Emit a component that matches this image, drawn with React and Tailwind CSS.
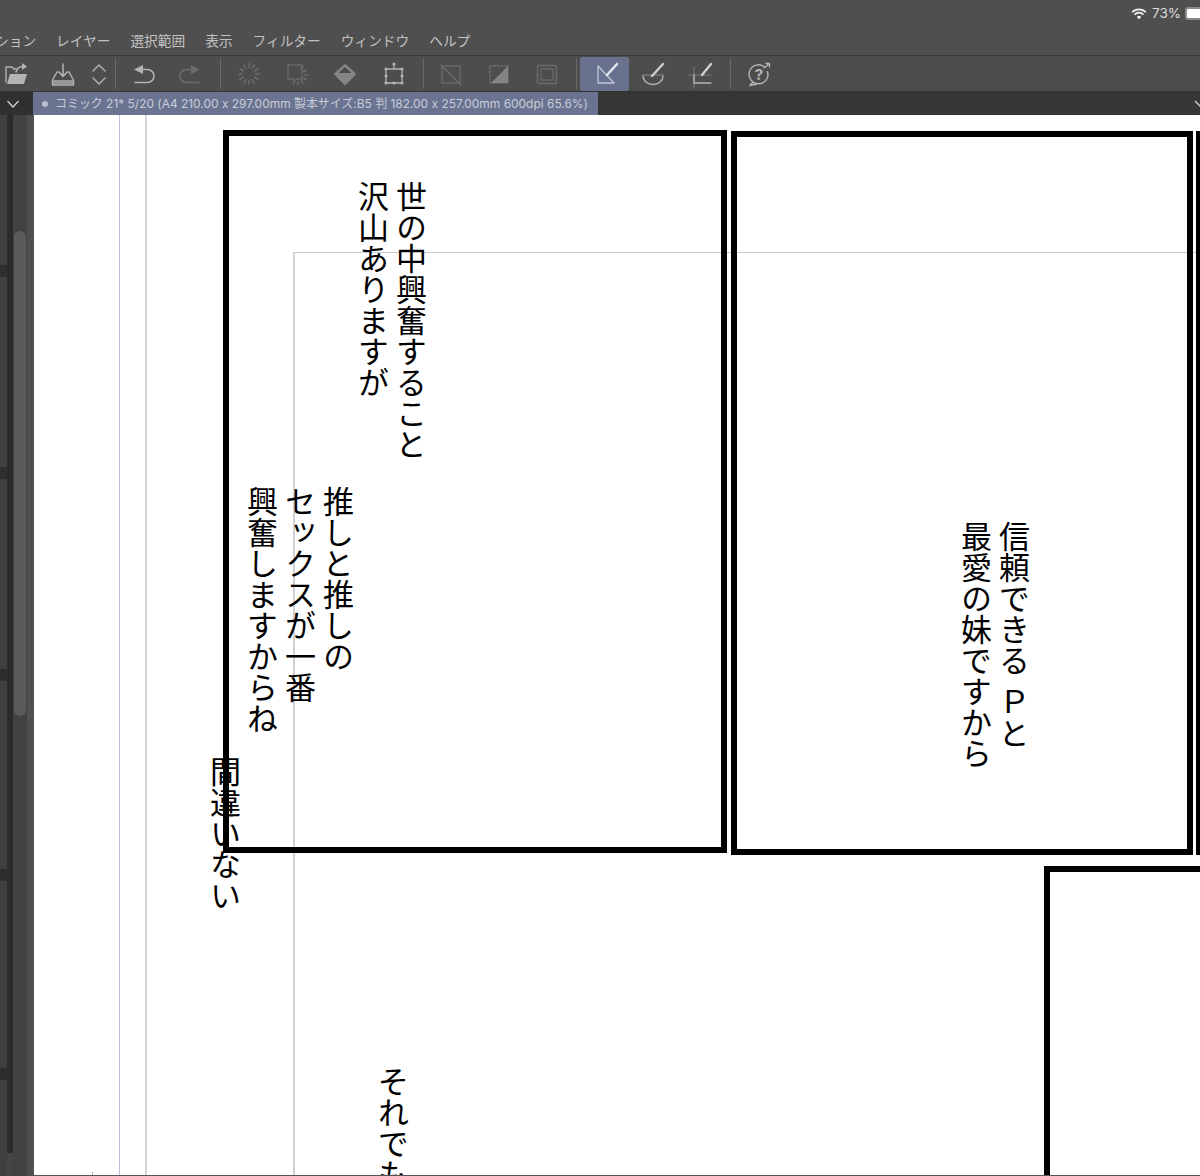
import React from "react";

const UI = { fontFamily: '"Inter","Noto Sans CJK JP",sans-serif' };
const CJK = { fontFamily: '"Noto Sans CJK JP",sans-serif' };
const DIM = "#6c6c6c";
const BRIGHT = "#b4b4b4";

function Svg({ children, w = 32 }) {
  return (
    <svg width={w} height="32" viewBox={`0 0 ${w} 32`} fill="none" strokeLinecap="round" strokeLinejoin="round">
      {children}
    </svg>
  );
}

function Btn({ children, className = "w-12" }) {
  return <div className={`${className} h-full flex items-center justify-center shrink-0`}>{children}</div>;
}

function Sep({ className }) {
  return <div className={`w-px h-[31px] bg-[#696969] shrink-0 ${className}`} />;
}

function Ticks({ cx, cy, r1, r2, from = 0, to = 12, color = DIM, n = 12 }) {
  const out = [];
  for (let i = from; i < to; i++) {
    const a = (i / n) * Math.PI * 2;
    out.push(
      <line key={i} x1={cx + Math.cos(a) * r1} y1={cy + Math.sin(a) * r1} x2={cx + Math.cos(a) * r2} y2={cy + Math.sin(a) * r2} stroke={color} strokeWidth="1.5" />
    );
  }
  return out;
}

function Toolbar() {
  return (
    <div className="flex items-center h-[35px] bg-[#4d4d4d] overflow-hidden">
      <div className="-ml-[9px] flex h-full items-center">
        <Btn>
          <Svg>
            <path d="M7 24V9h6l2 2h2" stroke={BRIGHT} strokeWidth="1.4" />
            <path d="M8 26l3-10h17l-3 10z" fill={BRIGHT} />
            <path d="M17 14c1-4 3-5.500 7-5.500" stroke={BRIGHT} strokeWidth="1.5" />
            <path d="M23 5l5 3.500-5 3.500z" fill={BRIGHT} />
          </Svg>
        </Btn>
      </div>
      <Btn>
        <Svg>
          <path d="M11 14h-1L5.500 22v5h21v-5L22 14h-1" stroke={BRIGHT} strokeWidth="1.4" />
          <rect x="6" y="22" width="20" height="4.500" fill="#969696" />
          <path d="M16 6v12M12 14l4 4.500 4-4.500" stroke={BRIGHT} strokeWidth="1.5" />
        </Svg>
      </Btn>
      <Btn className="w-[23px]">
        <Svg w={18}>
          <path d="M3 13l6-6 6 6M3 20l6 6 6-6" stroke={BRIGHT} strokeWidth="1.4" />
        </Svg>
      </Btn>
      <Sep className="ml-[5px] mr-[3px]" />
      <Btn>
        <Svg>
          <path d="M7 11.500L16 7v9z" fill={BRIGHT} />
          <path d="M15 11.500h5.500a6.500 6.500 0 0 1 0 13H8" stroke={BRIGHT} strokeWidth="1.5" />
        </Svg>
      </Btn>
      <Btn>
        <Svg>
          <path d="M25 11.500L16 7v9z" fill={DIM} />
          <path d="M17 11.500h-5.500a6.500 6.500 0 0 0 0 13H24" stroke={DIM} strokeWidth="1.5" />
        </Svg>
      </Btn>
      <Sep className="ml-[5px] mr-[4px]" />
      <Btn>
        <Svg>
          <Ticks cx={16} cy={16} r1={6.500} r2={10.500} />
        </Svg>
      </Btn>
      <Btn>
        <Svg>
          <rect x="7" y="7" width="14" height="14" stroke={DIM} strokeWidth="1.4" strokeDasharray="2 1.500" />
          <Ticks cx={17} cy={17} r1={6.500} r2={9.500} from={-2} to={5} />
        </Svg>
      </Btn>
      <Btn>
        <Svg>
          <path d="M6 16L16 7l10 9-10 10z" fill="#858585" stroke="#858585" strokeWidth="2" />
          <path d="M9.500 15L16 9l6.500 6z" fill="#4d4d4d" />
        </Svg>
      </Btn>
      <Btn>
        <Svg>
          <rect x="9" y="11" width="16" height="14" stroke={BRIGHT} strokeWidth="1.3" />
          <path d="M17 11V7" stroke={BRIGHT} strokeWidth="1.2" />
          {[[17, 6], [9, 11], [25, 11], [9, 18], [25, 18], [9, 25], [25, 25], [17, 25]].map(([x, y]) => (
            <circle key={`${x}-${y}`} cx={x} cy={y} r="1.600" fill={BRIGHT} />
          ))}
        </Svg>
      </Btn>
      <Sep className="ml-[6px] mr-[3px]" />
      <Btn>
        <Svg>
          <rect x="7" y="8" width="18" height="17" stroke={DIM} strokeWidth="1.4" strokeDasharray="2 1.500" />
          <path d="M6 7l20 20" stroke={DIM} strokeWidth="1.4" />
        </Svg>
      </Btn>
      <Btn>
        <Svg>
          <rect x="7" y="8" width="18" height="17" stroke={DIM} strokeWidth="1.4" strokeDasharray="2 1.500" />
          <path d="M25 8v17H8z" fill="#858585" />
        </Svg>
      </Btn>
      <Btn>
        <Svg>
          <rect x="6.500" y="7.500" width="19" height="18" rx="1.500" stroke={DIM} strokeWidth="1.400" />
          <rect x="10" y="11" width="12" height="11" stroke={DIM} strokeWidth="1.300" strokeDasharray="2 1.500" />
        </Svg>
      </Btn>
      <Sep className="ml-[5px] mr-[3px]" />
      <div className="w-[49px] h-[34px] flex items-center justify-center bg-[#68728f] rounded-[3px] shrink-0">
        <Svg>
          <path d="M9 8v17h16z" stroke="#c3c8d6" strokeWidth="1.300" />
          <path d="M18 17L28 6" stroke="#dfe2ea" strokeWidth="2.600" />
        </Svg>
      </div>
      <Btn>
        <Svg>
          <path d="M6 17h20" stroke="#8a8a8a" strokeWidth="1" />
          <path d="M6 18a10 8.500 0 0 0 20 0" stroke={BRIGHT} strokeWidth="1.400" />
          <path d="M15 18L26 6" stroke="#cfcfcf" strokeWidth="2.400" />
        </Svg>
      </Btn>
      <Btn>
        <Svg>
          <path d="M4 17h22M9 9v21" stroke="#7c7c7c" strokeWidth="1" />
          <path d="M9 17v8h17" stroke={BRIGHT} strokeWidth="1.400" />
          <path d="M17 17L26 6" stroke="#cfcfcf" strokeWidth="2.400" />
        </Svg>
      </Btn>
      <Sep className="ml-[5px] mr-[4px]" />
      <Btn>
        <Svg>
          <path d="M21 8.500A9.500 9.500 0 1 0 25 17a9.500 9.500 0 0 0-0.600-3.300M10 24l-3 3.500 6-1.200" stroke={BRIGHT} strokeWidth="1.400" />
          <text x="16" y="22" textAnchor="middle" fontSize="15" fontWeight="700" fill={BRIGHT} fontFamily="Inter, sans-serif">?</text>
          <path d="M21 10l5-4M23 5.500h3.500V9" stroke={BRIGHT} strokeWidth="1.300" />
        </Svg>
      </Btn>
    </div>
  );
}

function StatusIcons() {
  return (
    <div className="flex items-center justify-end h-[28px] pb-[1px] overflow-hidden">
      <svg width="16" height="12" viewBox="0 0 16 12" fill="none" strokeLinecap="butt">
        <path d="M1.200 4.200a9.500 9.500 0 0 1 13.600 0" stroke="#f2f2f2" strokeWidth="1.700" />
        <path d="M3.600 6.600a6 6 0 0 1 8.800 0" stroke="#f2f2f2" strokeWidth="1.700" />
        <path d="M5.800 8.900a3 3 0 0 1 4.400 0L8 11.200z" fill="#f2f2f2" />
      </svg>
      <span className="ml-[5px] text-[13.5px] leading-none text-[#dedede]" style={UI}>73%</span>
      <div className="ml-[4px] -mr-[18px] w-[33px] h-[13px] border-2 border-[#8a8a8a] rounded-[3px] bg-white shrink-0" />
    </div>
  );
}

function Menu() {
  const items = ["ション", "レイヤー", "選択範囲", "表示", "フィルター", "ウィンドウ", "ヘルプ"];
  return (
    <div className="flex gap-[20px] -ml-[5px] h-[28px] pb-[1px] items-center text-[13.7px] leading-none text-[#c2c2c2] border-b border-[#3a3a3a]" style={CJK}>
      {items.map((t) => (
        <span key={t} className="shrink-0">{t}</span>
      ))}
    </div>
  );
}

function TabBar() {
  return (
    <div className="flex h-[23px] bg-[#363636]">
      <div className="w-[33px] h-full bg-[#303030] flex items-center pl-[5px] shrink-0">
        <svg width="16" height="10" viewBox="0 0 16 10" fill="none">
          <path d="M2.500 2l5.500 6 5.500-6" stroke="#d0d0d0" strokeWidth="1.300" />
        </svg>
      </div>
      <div className="w-[565px] h-full bg-[#6a7390] flex items-center pl-[9px] text-[11.95px] leading-none text-[#c9cdd8] whitespace-nowrap overflow-hidden [font-feature-settings:'calt'_0]" style={UI}>
        <span className="w-[6px] h-[6px] rounded-full bg-[#b9bdca] mr-[7px] shrink-0" />
        コミック 21* 5/20 (A4 210.00 x 297.00mm 製本サイズ:B5 判 182.00 x 257.00mm 600dpi 65.6%)
      </div>
      <div className="flex-1 flex items-center justify-end overflow-hidden">
        <svg width="16" height="10" viewBox="0 0 16 10" fill="none" className="-mr-[9px] shrink-0">
          <path d="M2 2l6 6 6-6" stroke="#d0d0d0" strokeWidth="1.300" />
        </svg>
      </div>
    </div>
  );
}

function SidePanel() {
  const heights = ["h-[150px]", "h-[190px]", "h-[190px]", "h-[188px]", "h-[187px]", "h-[96px]"];
  return (
    <div className="relative w-[34px] h-full flex shrink-0 bg-[#444444] overflow-hidden border-r border-[#555555]">
      <div className="w-[7px] bg-[#2e2e2e] flex flex-col gap-[12px] shrink-0">
        {heights.map((h, i) => (
          <div key={i} className={`${h} w-full bg-[#3f3f3f] shrink-0`} />
        ))}
      </div>
      <div className="w-[6px] h-[1038px] bg-[#2b2b2b] shrink-0" />
      <div className="w-[14px] bg-[#424242] shrink-0 px-px">
        <div className="mt-[116px] w-[12px] h-[485px] rounded-full bg-[#5b5b5b]" />
      </div>
      <div className="flex-1 bg-[#4f4f4f]" />
    </div>
  );
}

function Panel({ className }) {
  return <div className={`absolute border-[6px] border-black ${className}`} />;
}

function Vertical({ className, children }) {
  return (
    <div className={`absolute [writing-mode:vertical-rl] whitespace-pre text-[31px] leading-[38px] text-black ${className}`} style={CJK}>
      {children}
    </div>
  );
}

function Canvas() {
  return (
    <div className="relative flex-1 h-full bg-white overflow-hidden">
      <div className="absolute left-[85px] top-0 bottom-0 w-px bg-[#c0c0d8]" />
      <div className="absolute left-[111px] top-0 bottom-0 w-[2px] bg-[#d4d4dc]" />
      <div className="absolute left-[259px] top-[137px] bottom-0 w-[1.500px] bg-[#cfcfd6]" />
      <div className="absolute left-[259px] top-[137px] right-0 h-px bg-[#c8c8d0]" />
      <Panel className="left-[189px] top-[15px] w-[504px] h-[723px]" />
      <Panel className="left-[697px] top-[16px] w-[462px] h-[724px]" />
      <Panel className="left-[1162px] top-[16px] w-[60px] h-[724px]" />
      <Panel className="left-[1010px] top-[751px] w-[300px] h-[500px]" />
      <Vertical className="left-[320px] top-[66px]">{"世の中興奮すること\n沢山ありますが"}</Vertical>
      <Vertical className="left-[209px] top-[371px]">{"推しと推しの\nセックスが一番\n興奮しますからね"}</Vertical>
      <Vertical className="left-[172px] top-[641px]">間違いない</Vertical>
      <Vertical className="left-[923px] top-[406px]">{"信頼できる\u2004Ｐと\n最愛の妹ですから"}</Vertical>
      <Vertical className="left-[340px] top-[951px]">それでも</Vertical>
      <div className="absolute left-[58px] bottom-px w-px h-[3px] bg-[#aaaaaa]" />
      <div className="absolute left-0 right-0 bottom-0 h-px bg-[#555555]" />
    </div>
  );
}

export default function App() {
  return (
    <div className="w-[1200px] h-[1176px] flex flex-col overflow-hidden bg-[#4f4f4f]">
      <StatusIcons />
      <Menu />
      <Toolbar />
      <div className="h-px bg-[#333333]" />
      <TabBar />
      <div className="flex flex-1 min-h-0">
        <SidePanel />
        <Canvas />
      </div>
    </div>
  );
}
